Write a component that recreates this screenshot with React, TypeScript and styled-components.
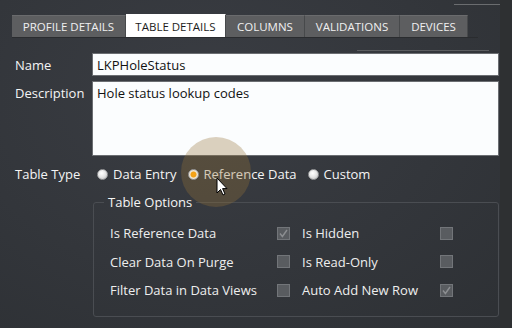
import styled, { createGlobalStyle } from 'styled-components';

const GlobalStyle = createGlobalStyle`
  html, body {
    margin: 0;
    padding: 0;
  }
  body {
    font-family: 'Open Sans', 'Noto Sans', sans-serif;
  }
`;

const tabs = [
  { label: 'PROFILE DETAILS', width: 114 },
  { label: 'TABLE DETAILS', width: 100, active: true },
  { label: 'COLUMNS', width: 79 },
  { label: 'VALIDATIONS', width: 95 },
  { label: 'DEVICES', width: 68 },
];

const options = [
  { label: 'Is Reference Data', checked: true },
  { label: 'Is Hidden', checked: false },
  { label: 'Clear Data On Purge', checked: false },
  { label: 'Is Read-Only', checked: false },
  { label: 'Filter Data in Data Views', checked: false },
  { label: 'Auto Add New Row', checked: true },
];

function App() {
  return (
    <Screen>
      <GlobalStyle />
      <TabBar>
        {tabs.map((t) => (
          <Tab key={t.label} $active={t.active} style={{ width: t.width }}>
            {t.label}
          </Tab>
        ))}
      </TabBar>

      <Panel>
        <Field>
          <Label>Name</Label>
          <TextBox>LKPHoleStatus</TextBox>
        </Field>
        <Field>
          <Label>Description</Label>
          <TextArea>Hole status lookup codes</TextArea>
        </Field>

        <TypeRow>
          <Label>Table Type</Label>
          <RadioGroup>
            <RadioItem>
              <Radio />
              Data Entry
            </RadioItem>
            <RadioItem>
              <Glow />
              <Radio $checked />
              Reference Data
              <Cursor viewBox="0 0 12 19">
                <path d="M1 1 L1 16 L4.5 12.5 L7 18 L9 17 L6.6 11.6 L11 11.6 Z" fill="#fff" stroke="#000" strokeWidth="1" />
              </Cursor>
            </RadioItem>
            <RadioItem>
              <Radio />
              Custom
            </RadioItem>
          </RadioGroup>
        </TypeRow>

        <GroupBox>
          <Legend>Table Options</Legend>
          <OptionGrid>
            {options.map((o) => (
              <Option key={o.label}>
                <span>{o.label}</span>
                <CheckBox>
                  {o.checked && (
                    <svg width="11" height="11" viewBox="0 0 11 11">
                      <path d="M2 5.5 L4.4 8.5 L9 2" fill="none" stroke="#8c8e91" strokeWidth="1.4" />
                    </svg>
                  )}
                </CheckBox>
              </Option>
            ))}
          </OptionGrid>
        </GroupBox>
      </Panel>
    </Screen>
  );
}

const Screen = styled.div`
  position: relative;
  width: 512px;
  height: 328px;
  overflow: hidden;
  box-sizing: border-box;
  padding: 14px 0 0 0;
  color: #f2f2f2;
  font-size: 13px;
  background:
    linear-gradient(#6a6c6f, #6a6c6f) 454px 4px / 46px 1px no-repeat,
    linear-gradient(#5b5d60, #5b5d60) 357px 50px / 132px 1px no-repeat,
    linear-gradient(90deg, transparent 0, transparent 500px, #2e3032 500px) no-repeat,
    radial-gradient(ellipse at 40% 30%, #3a3d43 0%, #33363b 55%, #2d3034 100%);
`;

const TabBar = styled.div`
  display: flex;
  align-items: flex-end;
  margin-left: 12px;
  width: 466px;
  height: 23px;
  border-bottom: 1px solid #2a2c2f;
`;

const Tab = styled.div<{ $active?: boolean }>`
  box-sizing: border-box;
  flex-shrink: 0;
  height: ${({ $active }) => ($active ? '23px' : '22px')};
  display: flex;
  align-items: center;
  justify-content: center;
  white-space: nowrap;
  font-size: 11.5px;
  background: ${({ $active }) => ($active ? '#ffffff' : '#5d5e60')};
  color: ${({ $active }) => ($active ? '#1c1c1c' : '#f0f0f0')};
  border-right: 1px solid #47494b;
  border-top: 1px solid ${({ $active }) => ($active ? '#ffffff' : '#6a6b6d')};
`;

const Panel = styled.div`
  display: flex;
  flex-direction: column;
  padding: 15px 13px 0 15px;
`;

const Field = styled.div`
  display: grid;
  grid-template-columns: 77px 1fr;
  align-items: start;
  margin-bottom: 5px;
`;

const Label = styled.div`
  color: #f4f4f4;
  padding-top: 4px;
  line-height: 16px;
`;

const TextBox = styled.div`
  box-sizing: border-box;
  height: 23px;
  background: #fbfdfe;
  border: 1px solid #6b6e72;
  color: #111;
  padding: 3px 4px;
  line-height: 16px;
`;

const TextArea = styled(TextBox)`
  height: 75px;
`;

const TypeRow = styled.div`
  display: grid;
  grid-template-columns: 77px 1fr;
  align-items: center;
  margin-top: 1px;
  height: 24px;

  ${Label} {
    padding-top: 0;
  }
`;

const RadioGroup = styled.div`
  display: flex;
  align-items: center;
  gap: 11px;
  padding-left: 5px;
`;

const RadioItem = styled.label`
  position: relative;
  display: flex;
  align-items: center;
  gap: 5px;
  color: #f4f4f4;
`;

const Radio = styled.span<{ $checked?: boolean }>`
  position: relative;
  width: 11px;
  height: 11px;
  box-sizing: border-box;
  border-radius: 50%;
  border: 1px solid #9a9b9d;
  background: ${({ $checked }) =>
    $checked
      ? 'radial-gradient(circle, #f5a31a 0, #f0a015 2.6px, #f2e6cf 3.4px, #d8d8d8 100%)'
      : 'radial-gradient(circle at 40% 35%, #ffffff 0, #e8e8e8 45%, #b9babb 100%)'};
`;

const Glow = styled.span`
  position: absolute;
  left: -7px;
  top: -28px;
  width: 70px;
  height: 70px;
  border-radius: 50%;
  background: rgba(150, 115, 55, 0.32);
  pointer-events: none;
`;

const Cursor = styled.svg`
  position: absolute;
  left: 28px;
  top: 12px;
  width: 12px;
  height: 19px;
`;

const GroupBox = styled.fieldset`
  margin: 7px 0 0 78px;
  padding: 0 0 0 16px;
  height: 124px;
  box-sizing: border-box;
  border: 1px solid #4a4d52;
  border-radius: 3px;
`;

const Legend = styled.legend`
  padding: 0 4px;
  margin-left: -6px;
  color: #f4f4f4;
  font-size: 13px;
`;

const OptionGrid = styled.div`
  display: grid;
  grid-template-columns: 192px 151px;
  row-gap: 12.5px;
  margin-top: 13px;
`;

const Option = styled.div`
  display: grid;
  align-items: center;
  height: 16px;
  color: #eeeeee;

  &:nth-child(odd) {
    grid-template-columns: 167px 13px;
  }
  &:nth-child(even) {
    grid-template-columns: 138px 13px;
  }
`;

const CheckBox = styled.span`
  box-sizing: border-box;
  width: 13px;
  height: 13px;
  border: 1px solid #727579;
  background: #595c60;
  display: flex;
  align-items: center;
  justify-content: center;
`;

export default App;
